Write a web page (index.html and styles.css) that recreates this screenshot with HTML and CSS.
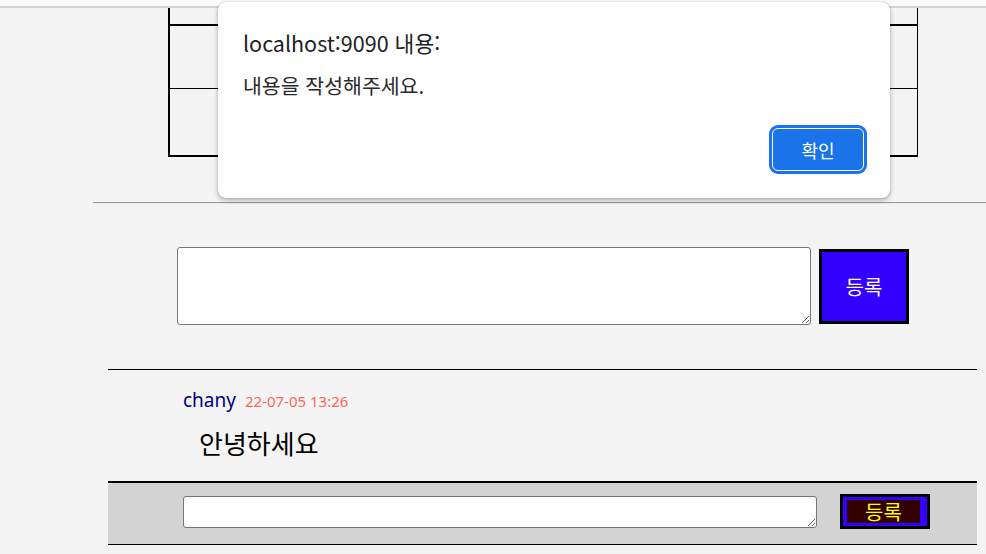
FILE: index.html
```html
<!DOCTYPE html>
<html lang="ko">
<head>
<meta charset="utf-8">
<link rel="stylesheet" href="styles.css">
</head>
<body>
<div class="topbar"></div>
<div class="board">
  <div class="row r1"></div>
  <div class="row r2"></div>
  <div class="row r3"></div>
</div>
<hr class="sep">
<form class="write">
  <textarea class="write-text"></textarea>
  <button type="button" class="write-btn">등록</button>
</form>
<section class="comment">
  <div class="meta"><span class="author">chany</span><span class="date">22-07-05 13:26</span></div>
  <p class="content">안녕하세요</p>
</section>
<div class="reply">
  <textarea class="reply-text"></textarea>
  <button type="button" class="reply-btn"><span class="reply-label">등록</span></button>
</div>

<div class="dialog">
  <div class="dlg-title">localhost:9090 내용:</div>
  <div class="dlg-msg">내용을 작성해주세요.</div>
  <div class="dlg-actions"><button type="button" class="dlg-ok">확인</button></div>
</div>
</body>
</html>
```
FILE: styles.css
```css
html, body { margin: 0; padding: 0; }
body {
  background: #f4f4f4;
  width: 986px;
  height: 554px;
  overflow: hidden;
  position: relative;
  font-family: "Noto Sans", "Noto Sans CJK KR", sans-serif;
}
.topbar {
  height: 6px;
  background: #fbfbfb;
  border-bottom: 2px solid #d4d4d4;
}
.board {
  margin-left: 168px;
  width: 747px;
  border-left: 2px solid #000;
  border-right: 1px solid #000;
}
.row.r1 { height: 16px; border-bottom: 2px solid #000; }
.row.r2 { height: 62px; border-bottom: 1px solid #000; }
.row.r3 { height: 66px; border-bottom: 2px solid #000; }
.sep {
  margin: 45px 0 0 93px;
  border: none;
  border-top: 1px solid #9a9a9a;
  border-bottom: 1px solid #ececec;
  height: 0;
}
.write {
  display: flex;
  align-items: flex-start;
  gap: 8px;
  margin: 43px 0 0 177px;
}
.write-text {
  box-sizing: border-box;
  width: 634px;
  height: 78px;
  border: 1px solid #767676;
  border-radius: 3px;
  background: #fff;
  margin: 0;
  resize: vertical;
}
.write-btn {
  box-sizing: border-box;
  margin-top: 2px;
  width: 90px;
  height: 75px;
  background: #3300ff;
  border: 3px solid #000;
  color: #fff;
  font-family: "Noto Sans CJK KR", sans-serif;
  font-size: 20px;
  padding: 0;
}
.comment {
  margin: 44px 9px 0 108px;
  border-top: 1px solid #000;
  padding: 17px 0 0 75px;
  height: 112px;
  box-sizing: border-box;
}
.meta { display: flex; align-items: baseline; gap: 9px; line-height: 26px; }
.author { color: #000080; font-size: 19px; }
.date { color: #ff6655; font-size: 15px; }
.content {
  margin: 14px 0 0 16px;
  font-family: "Noto Sans CJK KR", sans-serif;
  font-size: 26px;
  line-height: 30px;
  color: #000;
}
.reply {
  margin: 0 9px 0 108px;
  border-top: 2px solid #000;
  border-bottom: 1px solid #000;
  background: #d3d3d3;
  height: 61px;
  box-sizing: content-box;
  display: flex;
  align-items: flex-start;
  padding-left: 75px;
  gap: 23px;
}
.reply-text {
  box-sizing: border-box;
  margin: 13px 0 0 0;
  width: 634px;
  height: 32px;
  border: 1px solid #767676;
  border-radius: 3px;
  background: #fff;
  resize: vertical;
}
.reply-btn {
  box-sizing: border-box;
  margin-top: 11px;
  width: 90px;
  height: 35px;
  background: #3300ff;
  border: 3px solid #000;
  padding: 3px 7px 0 4px;
  display: flex;
}
.reply-label {
  flex: 1;
  height: 23px;
  background: #330000;
  color: #ffff00;
  font-family: "Noto Sans CJK KR", sans-serif;
  font-size: 20px;
  line-height: 23px;
  text-align: center;
}
.dialog {
  position: absolute;
  left: 218px;
  top: 2px;
  width: 672px;
  height: 196px;
  box-sizing: border-box;
  background: #fff;
  border-radius: 8px;
  box-shadow: 0 2px 5px rgba(0,0,0,0.3), 0 0 1px rgba(0,0,0,0.3);
  padding: 27px 23px 24px 25px;
  display: flex;
  flex-direction: column;
  font-family: "Noto Sans CJK KR", sans-serif;
  color: #202124;
}
.dlg-title { font-size: 21.5px; line-height: 28px; }
.dlg-msg { margin-top: 14px; font-size: 20.5px; line-height: 28px; color: #2a2a2a; }
.dlg-actions { margin-top: auto; display: flex; justify-content: flex-end; }
.dlg-ok {
  box-sizing: border-box;
  background: #1a73e8;
  color: #fff;
  border: 1px solid #fff;
  border-radius: 6px;
  box-shadow: 0 0 0 3px #1a73e8;
  outline: none;
  margin: 0 3px 3px 0;
  width: 92px;
  height: 43px;
  font-family: "Noto Sans CJK KR", sans-serif;
  font-size: 18px;
}
```
